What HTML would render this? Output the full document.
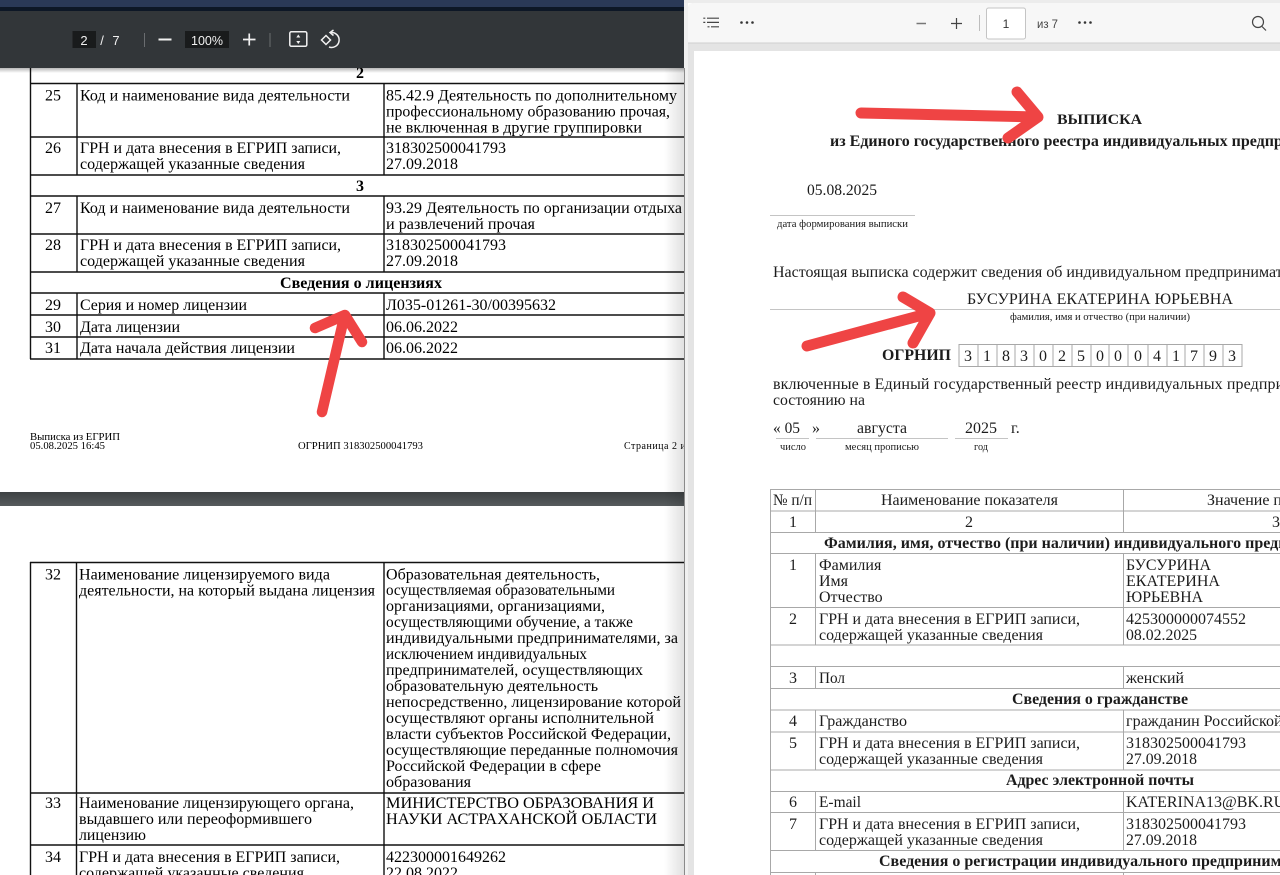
<!DOCTYPE html>
<html lang="ru"><head><meta charset="utf-8"><title>ЕГРИП</title>
<style>
html,body{margin:0;padding:0;width:1280px;height:875px;overflow:hidden;background:#fff}
svg{display:block;position:absolute;left:0;top:0}
text{font-family:"Liberation Serif","Noto Serif CJK SC",serif;font-size:16px;fill:#000}
.b{font-weight:bold}.m{text-anchor:middle}
.s{font-size:10px}
.r text{fill:#1c1c1c}
.t{filter:blur(.3px)}
.ui text{font-family:"Liberation Sans",sans-serif}
</style></head><body>
<svg width="1280" height="875" viewBox="0 0 1280 875" xmlns="http://www.w3.org/2000/svg">
<defs>
<clipPath id="cl"><rect x="0" y="68" width="684" height="807"/></clipPath>
<clipPath id="cr"><rect x="694" y="51" width="586" height="824"/></clipPath>
<linearGradient id="sh" x1="0" y1="0" x2="0" y2="1"><stop offset="0" stop-color="#000" stop-opacity=".28"/><stop offset="1" stop-color="#000" stop-opacity="0"/></linearGradient>
<linearGradient id="band" x1="0" y1="0" x2="0" y2="1"><stop offset="0" stop-color="#3d4143"/><stop offset="1" stop-color="#565b5d"/></linearGradient>
<linearGradient id="edge" x1="0" y1="0" x2="1" y2="0"><stop offset="0" stop-color="#000" stop-opacity="0"/><stop offset="1" stop-color="#000" stop-opacity=".12"/></linearGradient>
</defs>

<!-- LEFT VIEWER -->
<rect x="0" y="0" width="690" height="875" fill="#fff"/>
<g clip-path="url(#cl)">
<g class="t">
<g stroke="#111" stroke-width="1.4" fill="none">
<path d="M30.5 68V359M77 83.5V175M77 196V272M77 293V359M384 83.5V175M384 196V272M384 293V359"/>
<path d="M30 83.5H685M30 137H685M30 175H685M30 196H685M30 234H685M30 272H685M30 293H685M30 315H685M30 337H685M30 359H685"/>
</g>
<text x="360" y="78" class="b m">2</text>
<text x="53" y="100.500" class="m">25</text>
<text x="80" y="100.500" textLength="270" lengthAdjust="spacingAndGlyphs">Код и наименование вида деятельности</text>
<text x="386" y="100.500" textLength="291" lengthAdjust="spacingAndGlyphs">85.42.9 Деятельность по дополнительному</text>
<text x="386" y="116.500" textLength="284" lengthAdjust="spacingAndGlyphs">профессиональному образованию прочая,</text>
<text x="386" y="132.500" textLength="256" lengthAdjust="spacingAndGlyphs">не включенная в другие группировки</text>
<text x="53" y="153" class="m">26</text>
<text x="80" y="153" textLength="261" lengthAdjust="spacingAndGlyphs">ГРН и дата внесения в ЕГРИП записи,</text>
<text x="80" y="169" textLength="225" lengthAdjust="spacingAndGlyphs">содержащей указанные сведения</text>
<text x="386" y="153" textLength="120" lengthAdjust="spacingAndGlyphs">318302500041793</text>
<text x="386" y="169" textLength="72" lengthAdjust="spacingAndGlyphs">27.09.2018</text>
<text x="360" y="191" class="b m">3</text>
<text x="53" y="213" class="m">27</text>
<text x="80" y="213" textLength="270" lengthAdjust="spacingAndGlyphs">Код и наименование вида деятельности</text>
<text x="386" y="213" textLength="296" lengthAdjust="spacingAndGlyphs">93.29 Деятельность по организации отдыха</text>
<text x="386" y="229" textLength="149" lengthAdjust="spacingAndGlyphs">и развлечений прочая</text>
<text x="53" y="250" class="m">28</text>
<text x="80" y="250" textLength="261" lengthAdjust="spacingAndGlyphs">ГРН и дата внесения в ЕГРИП записи,</text>
<text x="80" y="266" textLength="225" lengthAdjust="spacingAndGlyphs">содержащей указанные сведения</text>
<text x="386" y="250" textLength="120" lengthAdjust="spacingAndGlyphs">318302500041793</text>
<text x="386" y="266" textLength="72" lengthAdjust="spacingAndGlyphs">27.09.2018</text>
<text x="280" y="288" class="b" textLength="162" lengthAdjust="spacingAndGlyphs">Сведения о лицензиях</text>
<text x="53" y="310" class="m">29</text>
<text x="80" y="310" textLength="167" lengthAdjust="spacingAndGlyphs">Серия и номер лицензии</text>
<text x="386" y="310" textLength="170" lengthAdjust="spacingAndGlyphs">Л035-01261-30/00395632</text>
<text x="53" y="332" class="m">30</text>
<text x="80" y="332" textLength="100" lengthAdjust="spacingAndGlyphs">Дата лицензии</text>
<text x="386" y="332" textLength="72" lengthAdjust="spacingAndGlyphs">06.06.2022</text>
<text x="53" y="353" class="m">31</text>
<text x="80" y="353" textLength="215" lengthAdjust="spacingAndGlyphs">Дата начала действия лицензии</text>
<text x="386" y="353" textLength="72" lengthAdjust="spacingAndGlyphs">06.06.2022</text>

<text x="30" y="440" class="s" textLength="90" lengthAdjust="spacingAndGlyphs">Выписка из ЕГРИП</text>
<text x="30" y="449" class="s" textLength="75" lengthAdjust="spacingAndGlyphs">05.08.2025 16:45</text>
<text x="298" y="449" class="s" textLength="125" lengthAdjust="spacingAndGlyphs">ОГРНИП 318302500041793</text>
<text x="624" y="449" class="s" style="letter-spacing:.5px">Страница 2 из 7</text>

<g stroke="#111" stroke-width="1.4" fill="none">
<path d="M30.5 562V875M76.5 562V875M384 562V875M30 562.5H685M30 793H685M30 845H685"/>
</g>
<text x="53" y="579.500" class="m">32</text>
<text x="79" y="579.500" textLength="251" lengthAdjust="spacingAndGlyphs">Наименование лицензируемого вида</text>
<text x="79" y="595.500" textLength="296" lengthAdjust="spacingAndGlyphs">деятельности, на который выдана лицензия</text>
<text x="386" y="579.500" textLength="214" lengthAdjust="spacingAndGlyphs">Образовательная деятельность,</text>
<text x="386" y="595" textLength="229" lengthAdjust="spacingAndGlyphs">осуществляемая образовательными</text>
<text x="386" y="611" textLength="219" lengthAdjust="spacingAndGlyphs">организациями, организациями,</text>
<text x="386" y="627" textLength="247" lengthAdjust="spacingAndGlyphs">осуществляющими обучение, а также</text>
<text x="386" y="643" textLength="292" lengthAdjust="spacingAndGlyphs">индивидуальными предпринимателями, за</text>
<text x="386" y="659" textLength="201" lengthAdjust="spacingAndGlyphs">исключением индивидуальных</text>
<text x="386" y="675" textLength="257" lengthAdjust="spacingAndGlyphs">предпринимателей, осуществляющих</text>
<text x="386" y="691" textLength="212" lengthAdjust="spacingAndGlyphs">образовательную деятельность</text>
<text x="386" y="707" textLength="295" lengthAdjust="spacingAndGlyphs">непосредственно, лицензирование которой</text>
<text x="386" y="723" textLength="268" lengthAdjust="spacingAndGlyphs">осуществляют органы исполнительной</text>
<text x="386" y="739" textLength="285" lengthAdjust="spacingAndGlyphs">власти субъектов Российской Федерации,</text>
<text x="386" y="755" textLength="292" lengthAdjust="spacingAndGlyphs">осуществляющие переданные полномочия</text>
<text x="386" y="771" textLength="215" lengthAdjust="spacingAndGlyphs">Российской Федерации в сфере</text>
<text x="386" y="787" textLength="85" lengthAdjust="spacingAndGlyphs">образования</text>
<text x="53" y="808" class="m">33</text>
<text x="79" y="808" textLength="275" lengthAdjust="spacingAndGlyphs">Наименование лицензирующего органа,</text>
<text x="79" y="824" textLength="233" lengthAdjust="spacingAndGlyphs">выдавшего или переоформившего</text>
<text x="79" y="840" textLength="67" lengthAdjust="spacingAndGlyphs">лицензию</text>
<text x="386" y="808" textLength="268" lengthAdjust="spacingAndGlyphs">МИНИСТЕРСТВО ОБРАЗОВАНИЯ И</text>
<text x="386" y="824" textLength="271" lengthAdjust="spacingAndGlyphs">НАУКИ АСТРАХАНСКОЙ ОБЛАСТИ</text>
<text x="53" y="862" class="m">34</text>
<text x="79" y="862" textLength="261" lengthAdjust="spacingAndGlyphs">ГРН и дата внесения в ЕГРИП записи,</text>
<text x="79" y="878" textLength="225" lengthAdjust="spacingAndGlyphs">содержащей указанные сведения</text>
<text x="386" y="862" textLength="120" lengthAdjust="spacingAndGlyphs">422300001649262</text>
<text x="386" y="878" textLength="72" lengthAdjust="spacingAndGlyphs">22.08.2022</text>
</g>

<rect x="0" y="492" width="690" height="14" fill="url(#band)"/>
<rect x="664" y="68" width="20" height="807" fill="url(#edge)"/>

<!-- arrow 3 -->
<g stroke="#ef4444" stroke-width="10.5" stroke-linecap="round" stroke-linejoin="round" fill="none">
<path d="M322 412L344 318M315 328L345 315L362 342"/>
</g>
</g>

<!-- left toolbar -->
<rect x="0" y="68" width="684" height="5" fill="url(#sh)"/>
<rect x="0" y="0" width="684" height="7" fill="#2a3957"/>
<rect x="0" y="7" width="684" height="4" fill="#0d1726"/>
<rect x="0" y="11" width="684" height="57" fill="#323639"/>
<g class="ui">
<rect x="72.500" y="31" width="23.500" height="17" fill="#191b1c"/>
<text x="84" y="45" text-anchor="middle" style="font-size:13px;fill:#f1f1f1">2</text>
<text x="102" y="45" text-anchor="middle" style="font-size:13px;fill:#f1f1f1">/</text>
<text x="116" y="45" text-anchor="middle" style="font-size:13px;fill:#f1f1f1">7</text>
<rect x="144" y="33" width="1" height="14" fill="#6a6d70"/>
<rect x="158.500" y="38.500" width="13" height="2" fill="#f1f1f1"/>
<rect x="185" y="31" width="44" height="17" fill="#191b1c"/>
<text x="207" y="45" text-anchor="middle" textLength="32" lengthAdjust="spacingAndGlyphs" style="font-size:13px;fill:#f1f1f1">100%</text>
<path d="M243 39.500H255.500M249.250 33.500V45.500" stroke="#f1f1f1" stroke-width="1.700" fill="none"/>
<rect x="269.500" y="33" width="1" height="14" fill="#6a6d70"/>
<rect x="289.800" y="31.800" width="17" height="14.500" rx="1.500" fill="none" stroke="#f1f1f1" stroke-width="1.500"/>
<path d="M298.300 34.500L300.300 37.500H296.300ZM298.300 44L300.300 41H296.300Z" fill="#f1f1f1"/>
<path d="M331 32.500A7.500 7.500 0 1 1 329 47" fill="none" stroke="#f1f1f1" stroke-width="1.500"/>
<path d="M333.500 30L330 32.500L333.500 35.500" fill="none" stroke="#f1f1f1" stroke-width="1.500"/>
<path d="M326 35.500L330.500 40L326 44.500L321.500 40Z" fill="#323639" stroke="#f1f1f1" stroke-width="1.500"/>
</g>

<!-- RIGHT WINDOW -->
<rect x="684" y="0" width="4" height="875" fill="#f0f0f0"/>
<rect x="684" y="68" width="1" height="807" fill="#8a8a8a"/>
<rect x="684" y="0" width="596" height="3" fill="#ececec"/>
<path d="M688 875V9Q688 3 694 3H1280V875Z" fill="#e4e4e4"/>
<path d="M688 43V9Q688 3 694 3H1280V43Z" fill="#f7f7f7"/>
<rect x="688" y="42.500" width="592" height="1" fill="#cfcfcf"/>
<rect x="694" y="51" width="586" height="824" fill="#fff"/>

<g class="ui">
<g stroke="#444" fill="none" stroke-width="1.200">
<path d="M707 18.200H719M707 22.400H719M711 26.800H719"/>
<path d="M703.300 18.200H705.300M703.300 22.400H705.300M707.500 26.800H709.500"/>
<path d="M916.500 23.500H926" stroke="#777" stroke-width="1.500"/>
<path d="M951 23.500H962M956.500 18V29"/>
<circle cx="1258" cy="22" r="5.500"/>
<path d="M1262 26.500L1266 30.500"/>
</g>
<g fill="#333"><circle cx="741.500" cy="22.500" r="1.300"/><circle cx="747" cy="22.500" r="1.300"/><circle cx="752.500" cy="22.500" r="1.300"/>
<circle cx="1079.500" cy="22.500" r="1.300"/><circle cx="1085" cy="22.500" r="1.300"/><circle cx="1090.500" cy="22.500" r="1.300"/></g>
<rect x="979" y="15" width="1" height="16" fill="#bdbdbd"/>
<rect x="986.500" y="8" width="39" height="31" rx="2" fill="#fff" stroke="#c4c4c4"/>
<text x="1006" y="28" text-anchor="middle" style="font-size:12px;fill:#333">1</text>
<text x="1037" y="28" textLength="21" lengthAdjust="spacingAndGlyphs" style="font-size:12px;fill:#444">из 7</text>
</g>

<g clip-path="url(#cr)" class="r">
<g class="t">
<text x="1057" y="124" class="b" textLength="85" lengthAdjust="spacingAndGlyphs" style="font-size:15px">ВЫПИСКА</text>
<text x="830" y="146" class="b">из Единого государственного реестра индивидуальных предпринимателей</text>
<text x="807" y="195" textLength="70" lengthAdjust="spacingAndGlyphs">05.08.2025</text>
<rect x="770" y="215" width="145" height="1" fill="#c4c4c4"/>
<text x="777" y="227" class="s" textLength="131" lengthAdjust="spacingAndGlyphs">дата формирования выписки</text>
<text x="773" y="277">Настоящая выписка содержит сведения об индивидуальном предпринимателе</text>
<text x="967" y="304" textLength="266" lengthAdjust="spacingAndGlyphs">БУСУРИНА ЕКАТЕРИНА ЮРЬЕВНА</text>
<rect x="770" y="309" width="510" height="1" fill="#c4c4c4"/>
<text x="1010" y="320" class="s" textLength="180" lengthAdjust="spacingAndGlyphs">фамилия, имя и отчество (при наличии)</text>
<text x="882" y="360" class="b" textLength="69" lengthAdjust="spacingAndGlyphs">ОГРНИП</text>
<g fill="none" stroke="#a8a8a8" stroke-width="1">
<path d="M959 344.500H1242M959 366.500H1242M959 344V367M978 344V367M997 344V367M1015 344V367M1034 344V367M1053 344V367M1072 344V367M1091 344V367M1109 344V367M1128 344V367M1148 344V367M1167 344V367M1185 344V367M1204 344V367M1223 344V367M1242 344V367"/>
</g>
<text x="968" y="361" class="m">3</text><text x="987" y="361" class="m">1</text><text x="1006" y="361" class="m">8</text><text x="1024" y="361" class="m">3</text><text x="1043" y="361" class="m">0</text><text x="1062" y="361" class="m">2</text><text x="1081" y="361" class="m">5</text><text x="1100" y="361" class="m">0</text><text x="1118" y="361" class="m">0</text><text x="1138" y="361" class="m">0</text><text x="1157" y="361" class="m">4</text><text x="1176" y="361" class="m">1</text><text x="1194" y="361" class="m">7</text><text x="1213" y="361" class="m">9</text><text x="1232" y="361" class="m">3</text>
<text x="773" y="389" style="letter-spacing:.1px">включенные в Единый государственный реестр индивидуальных предпринимателей</text>
<text x="773" y="405" textLength="92" lengthAdjust="spacingAndGlyphs">состоянию на</text>
<text x="773" y="433" textLength="27" lengthAdjust="spacingAndGlyphs">« 05</text>
<text x="812" y="433">»</text>
<text x="857" y="433" textLength="50" lengthAdjust="spacingAndGlyphs">августа</text>
<text x="965" y="433" textLength="32" lengthAdjust="spacingAndGlyphs">2025</text>
<text x="1011" y="433">г.</text>
<g fill="#c4c4c4"><rect x="776" y="438" width="33" height="1"/><rect x="816" y="438" width="132" height="1"/><rect x="955" y="438" width="53" height="1"/></g>
<text x="780" y="450" class="s" textLength="26" lengthAdjust="spacingAndGlyphs">число</text>
<text x="845" y="450" class="s" textLength="74" lengthAdjust="spacingAndGlyphs">месяц прописью</text>
<text x="974" y="450" class="s" textLength="14" lengthAdjust="spacingAndGlyphs">год</text>

<g fill="none" stroke="#a8a8a8" stroke-width="1">
<path d="M770 489.500H1280M770 511H1280M770 532.500H1280M770 553.500H1280M770 607.500H1280M770 645H1280M770 666.500H1280M770 688.500H1280M770 710H1280M770 732H1280M770 770H1280M770 791.500H1280M770 812.500H1280M770 850.500H1280M770 872.500H1280"/>
<path d="M770.500 489V875M815.500 489V532.500M815.500 553.500V645M815.500 666.500V688.500M815.500 710V770M815.500 791.500V850.500M815.500 872.500V875M1123.500 489V532.500M1123.500 553.500V645M1123.500 666.500V688.500M1123.500 710V770M1123.500 791.500V850.500M1123.500 872.500V875"/>
</g>
<text x="773" y="505" textLength="39" lengthAdjust="spacingAndGlyphs">№ п/п</text>
<text x="881" y="505" textLength="177" lengthAdjust="spacingAndGlyphs">Наименование показателя</text>
<text x="1207" y="505">Значение показателя</text>
<text x="793" y="527" class="m">1</text><text x="969" y="527" class="m">2</text><text x="1276" y="527" class="m">3</text>
<text x="824" y="548" class="b">Фамилия, имя, отчество (при наличии) индивидуального предпринимателя</text>
<text x="793" y="570" class="m">1</text>
<text x="819" y="570">Фамилия</text><text x="819" y="586">Имя</text><text x="819" y="602">Отчество</text>
<text x="1126" y="570" textLength="85" lengthAdjust="spacingAndGlyphs">БУСУРИНА</text><text x="1126" y="586" textLength="94" lengthAdjust="spacingAndGlyphs">ЕКАТЕРИНА</text><text x="1126" y="602" textLength="77" lengthAdjust="spacingAndGlyphs">ЮРЬЕВНА</text>
<text x="793" y="624" class="m">2</text>
<text x="819" y="624" textLength="261" lengthAdjust="spacingAndGlyphs">ГРН и дата внесения в ЕГРИП записи,</text>
<text x="819" y="640" textLength="224" lengthAdjust="spacingAndGlyphs">содержащей указанные сведения</text>
<text x="1126" y="624" textLength="120" lengthAdjust="spacingAndGlyphs">425300000074552</text>
<text x="1126" y="640" textLength="71" lengthAdjust="spacingAndGlyphs">08.02.2025</text>
<text x="793" y="683" class="m">3</text>
<text x="819" y="683" textLength="26" lengthAdjust="spacingAndGlyphs">Пол</text>
<text x="1126" y="683" textLength="58" lengthAdjust="spacingAndGlyphs">женский</text>
<text x="1012" y="704" class="b" textLength="176" lengthAdjust="spacingAndGlyphs">Сведения о гражданстве</text>
<text x="793" y="726" class="m">4</text>
<text x="819" y="726" textLength="88" lengthAdjust="spacingAndGlyphs">Гражданство</text>
<text x="1126" y="726">гражданин Российской Федерации</text>
<text x="793" y="748" class="m">5</text>
<text x="819" y="748" textLength="261" lengthAdjust="spacingAndGlyphs">ГРН и дата внесения в ЕГРИП записи,</text>
<text x="819" y="764" textLength="224" lengthAdjust="spacingAndGlyphs">содержащей указанные сведения</text>
<text x="1126" y="748" textLength="120" lengthAdjust="spacingAndGlyphs">318302500041793</text>
<text x="1126" y="764" textLength="71" lengthAdjust="spacingAndGlyphs">27.09.2018</text>
<text x="1006" y="785" class="b" textLength="188" lengthAdjust="spacingAndGlyphs">Адрес электронной почты</text>
<text x="793" y="807" class="m">6</text>
<text x="819" y="807" textLength="42" lengthAdjust="spacingAndGlyphs">E-mail</text>
<text x="1126" y="807">KATERINA13@BK.RU</text>
<text x="793" y="829" class="m">7</text>
<text x="819" y="829" textLength="261" lengthAdjust="spacingAndGlyphs">ГРН и дата внесения в ЕГРИП записи,</text>
<text x="819" y="845" textLength="224" lengthAdjust="spacingAndGlyphs">содержащей указанные сведения</text>
<text x="1126" y="829" textLength="120" lengthAdjust="spacingAndGlyphs">318302500041793</text>
<text x="1126" y="845" textLength="71" lengthAdjust="spacingAndGlyphs">27.09.2018</text>
<text x="879" y="866" class="b">Сведения о регистрации индивидуального предпринимателя</text>
</g>

<g stroke="#ef4444" stroke-width="11" stroke-linecap="round" stroke-linejoin="round" fill="none">
<path d="M861 113L1038 117M1017 92L1038 117L1008 138"/>
<path d="M807 346L930 313M903 297L930 313L913 343"/>
</g>
</g>
</svg>
</body></html>
